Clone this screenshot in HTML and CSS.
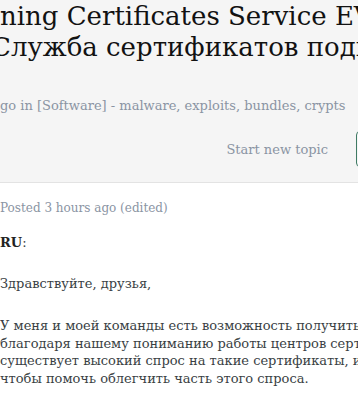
FILE: index.html
```html
<!DOCTYPE html>
<html lang="ru">
<head>
    <meta charset="UTF-8">
    <meta name="viewport" content="width=device-width, initial-scale=1.0">
    <title>Code Signing Certificates Service EV</title>
    <link rel="stylesheet" href="styles.css">
</head>
<body>
    <div class="topic-header">
        <h1 class="topic-title">
            <span class="title-line">ning Certificates Service EV</span>
            <span class="title-line title-line-2">Служба сертификатов подписи кода</span>
        </h1>
        <p class="topic-meta">go in [Software] - malware, exploits, bundles, crypts</p>
        <div class="topic-actions">
            <a class="new-topic">Start new topic</a>
            <button class="reply-button">Reply to this topic</button>
        </div>
    </div>
    <div class="post">
        <p class="post-date">Posted 3 hours ago (edited)</p>
        <p class="post-text"><strong>RU</strong>:</p>
        <p class="post-text post-greeting">Здравствуйте, друзья,</p>
        <p class="post-text post-lines">
            <span class="line">У меня и моей команды есть возможность получить EV</span>
            <span class="line">благодаря нашему пониманию работы центров сертификации</span>
            <span class="line">существует высокий спрос на такие сертификаты, и мы</span>
            <span class="line">чтобы помочь облегчить часть этого спроса.</span>
        </p>
    </div>
</body>
</html>
```

FILE: styles.css
```css
body {
    margin: 0;
    padding: 0;
    overflow: hidden;
    background-color: #ffffff;
    font-family: "DejaVu Serif", serif;
    color: #3a3f44;
}

.topic-header {
    background-color: #f5f5f5;
    border-bottom: 1px solid #e3e3e3;
    padding-top: 1px;
    height: 183px;
    box-sizing: border-box;
}

.topic-title {
    margin: 0;
    font-size: 26px;
    line-height: 31px;
    font-weight: normal;
    color: #121212;
    white-space: nowrap;
}

.title-line {
    display: block;
}

.title-line-2 {
    margin-left: -9px;
}

.topic-meta {
    margin: 33px 0 0 0;
    font-size: 13px;
    line-height: 20px;
    color: #8a94a3;
    white-space: nowrap;
}

.topic-actions {
    display: flex;
    justify-content: flex-end;
    align-items: center;
    gap: 28px;
    margin-top: 15px;
    margin-right: -148px;
}

.new-topic {
    font-size: 13px;
    color: #8a94a3;
}

.reply-button {
    width: 150px;
    height: 36px;
    border: 1px solid #3f7b64;
    border-radius: 4px;
    background-color: #f5f5f5;
    color: #3f7b64;
    font-family: inherit;
}

.post {
    padding-top: 15px;
}

.post-date {
    margin: 0;
    font-size: 12px;
    line-height: 20px;
    color: #8a94a3;
}

.post-text {
    margin: 15px 0 0 0;
    font-size: 13px;
    line-height: 20px;
    white-space: nowrap;
}

.post-text strong {
    color: #222;
}

.post-greeting {
    margin-top: 21px;
}

.post-lines {
    margin-top: 23px;
    line-height: 17.7px;
}

.line {
    display: block;
}
```
